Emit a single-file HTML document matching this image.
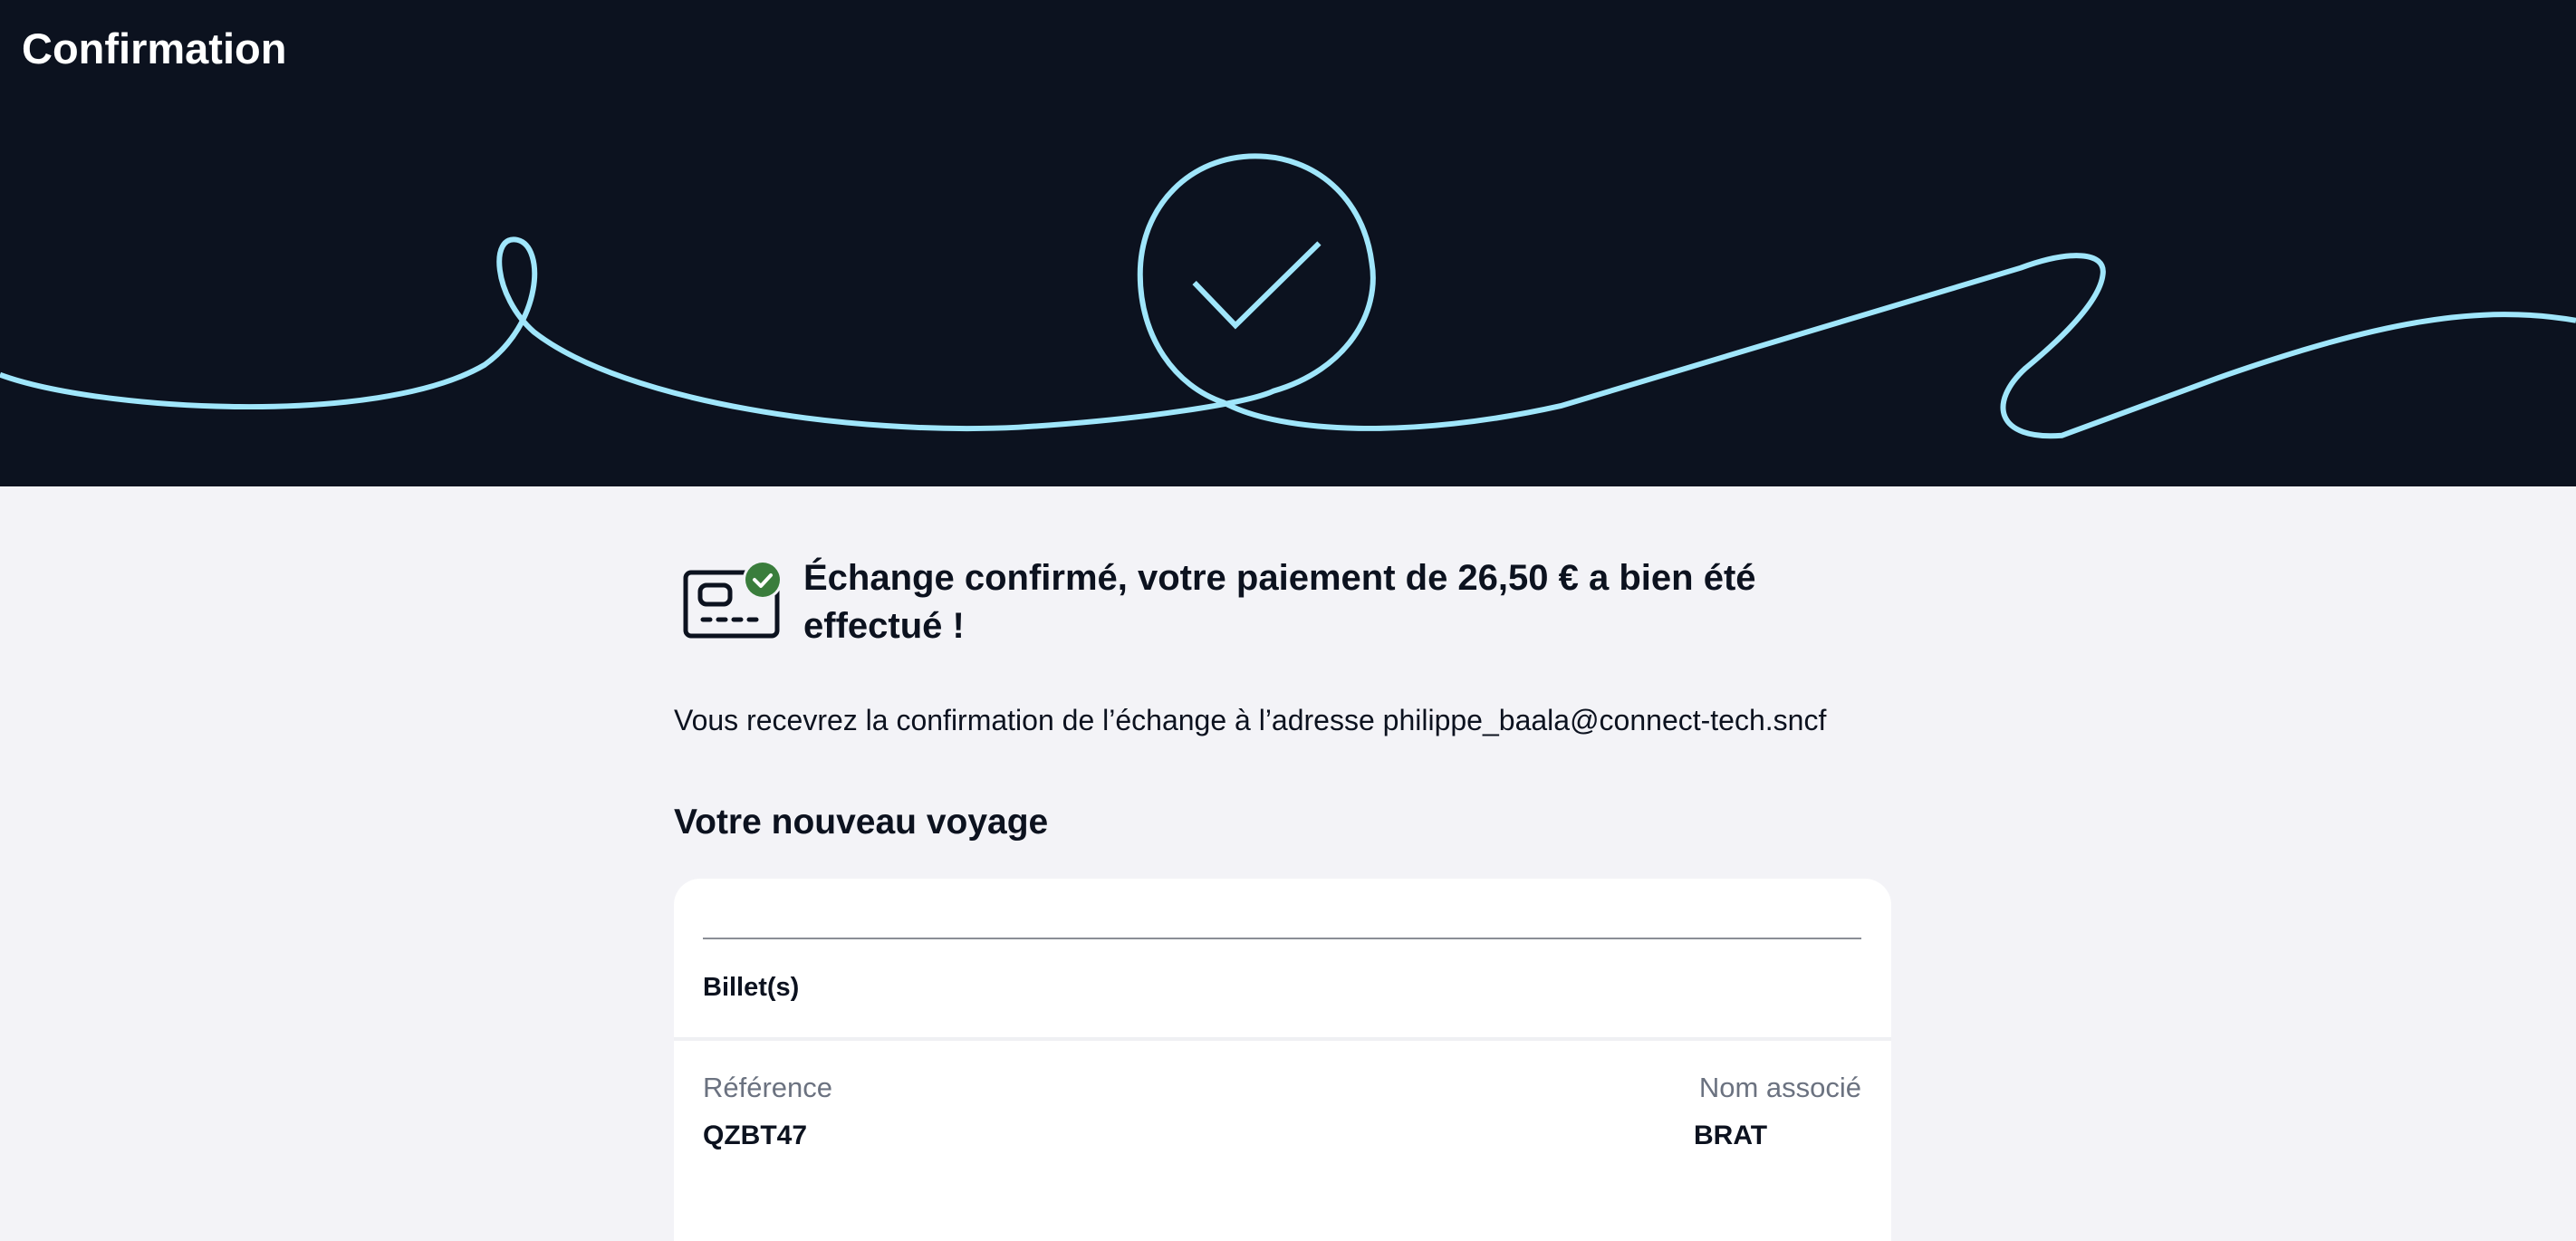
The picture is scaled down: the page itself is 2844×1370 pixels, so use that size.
<!DOCTYPE html>
<html><head><meta charset="utf-8"><style>
*{margin:0;padding:0;box-sizing:border-box}
body{width:2844px;height:1312px;background:#f3f3f7;font-family:"Liberation Sans",sans-serif;color:#0c121f;position:relative;overflow:hidden}
.hdr{position:absolute;left:0;top:0;width:2844px;height:537px;background:#0c121f}
.t{position:absolute;white-space:nowrap}
</style></head><body>
<div class="hdr">
<svg width="2844" height="537" viewBox="0 0 1568 296" preserveAspectRatio="none" style="position:absolute;left:0;top:0">
<path d="M0,228 C60,250 230,260 295,222 C330,197 332,150 315,146 C298,142 300,180 325,202 C380,245 520,265 620,260 C700,255 760,245 775,238 C820,225 840,190 835,160 C830,120 800,95 764,95 C725,95 694,125 694,167 C694,205 715,235 745,245 C780,264 860,267 950,247 L1230,163 C1260,152 1282,153 1280,167 C1278,185 1250,210 1233,224 C1210,245 1215,268 1255,265 L1350,230 C1450,195 1510,185 1568,195" fill="none" stroke="#a0e6fb" stroke-width="3.3"/>
<path d="M727,172 L752,198 L803,148" fill="none" stroke="#a0e6fb" stroke-width="3.3"/>
</svg>
<div class="t" style="left:24px;top:26px;font-size:47px;font-weight:bold;color:#fff">Confirmation</div>
</div>
<svg style="position:absolute;left:740px;top:610px" width="160" height="110" viewBox="0 0 160 110">
<rect x="17" y="22" width="101" height="70" rx="6" fill="none" stroke="#0c121f" stroke-width="5"/>
<rect x="33" y="36" width="33" height="21" rx="7" fill="none" stroke="#0c121f" stroke-width="5"/>
<path d="M36,74 H44 M53,74 H61 M70,74 H78 M87,74 H95" stroke="#0c121f" stroke-width="5" stroke-linecap="round"/>
<circle cx="102" cy="30" r="22" fill="#f3f3f7"/>
<circle cx="102" cy="30" r="19" fill="#3a7d3c"/>
<path d="M93,30 L100,37 L111,25" fill="none" stroke="#fff" stroke-width="4" stroke-linecap="round" stroke-linejoin="round"/>
</svg>
<div class="t" style="left:887px;top:612px;font-size:40px;font-weight:bold;line-height:53px">Échange confirmé, votre paiement de 26,50 € a bien été<br>effectué !</div>
<div class="t" style="left:744px;top:777px;font-size:32px">Vous recevrez la confirmation de l’échange à l’adresse philippe_baala@connect-tech.sncf</div>
<div class="t" style="left:744px;top:886px;font-size:39px;font-weight:bold">Votre nouveau voyage</div>
<div style="position:absolute;left:744px;top:970px;width:1344px;height:400px;background:#fff;border-radius:29px 29px 0 0"></div>
<div style="position:absolute;left:776px;top:1035px;width:1279px;height:2px;background:#8a8e96"></div>
<div class="t" style="left:776px;top:1074px;font-size:29px;font-weight:bold">Billet(s)</div>
<div style="position:absolute;left:744px;top:1145px;width:1344px;height:4px;background:#eff0f3"></div>
<div class="t" style="left:776px;top:1183px;font-size:31px;color:#6b7280">Référence</div>
<div class="t" style="right:789px;top:1183px;font-size:31px;color:#6b7280">Nom associé</div>
<div class="t" style="left:776px;top:1237px;font-size:30px;font-weight:bold">QZBT47</div>
<div class="t" style="left:1870px;top:1237px;font-size:30px;font-weight:bold">BRAT</div>
</body></html>
